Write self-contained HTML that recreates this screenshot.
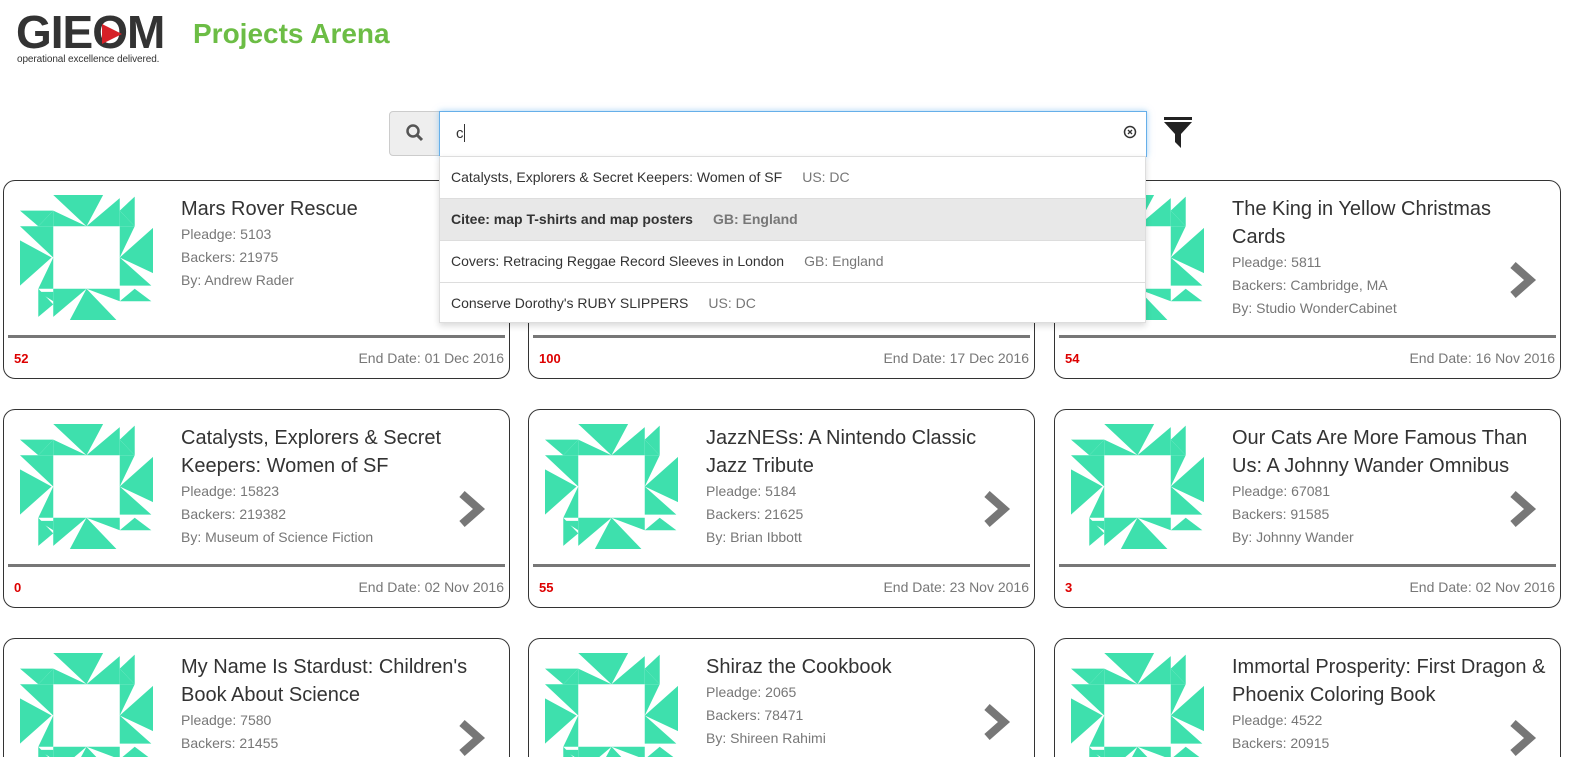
<!DOCTYPE html>
<html style="width:1574px;height:757px;overflow:hidden"><head><meta charset="utf-8"><style>
*{box-sizing:border-box;margin:0;padding:0}
body{width:1574px;height:757px;overflow:hidden;background:#fff;font-family:"Liberation Sans",Arial,sans-serif;position:relative}
.abs{position:absolute}
.card{position:absolute;width:507px;height:199px;border:1px solid #333;border-radius:12px;background:#fff;overflow:hidden}
.card svg.ic{position:absolute;left:16px;top:14px}
.card .t{position:absolute;left:177px;top:14px;font-size:20px;line-height:28px;color:#333;white-space:nowrap}
.card .d{font-size:14px;color:#777;line-height:23px}
.card .sep{position:absolute;left:4px;right:4px;top:154px;height:3px;background:#777}
.card .n{position:absolute;left:10px;top:170px;font-size:13px;font-weight:bold;color:#d00}
.card .e{position:absolute;right:5px;top:169px;font-size:14px;color:#777}
.card .ch{position:absolute;left:452px;top:79px}
.dd{position:absolute;left:439px;top:156px;width:707px;height:167px;background:#fff;border:1px solid #ddd;box-shadow:0 3px 6px rgba(0,0,0,.15)}
.dd div{height:42px;line-height:40px;padding-left:11px;font-size:14px;color:#333;border-bottom:1px solid #ddd}
.dd span{color:#777;margin-left:20px}
</style></head><body>
<svg width="0" height="0" style="position:absolute"><defs>
<g id="idn" fill="#3ee0ad">
<polygon points="1,0 2.5,0 2,1"/><polygon points="1,0.5 1,1 2,1"/><polygon points="2,1 3,0.1 3,1"/>
<polygon points="3,0.5 3.45,0.05 3.45,1"/><polygon points="3,0.5 3.45,1 3,1"/>
<polygon points="0,0.5 1,0.5 0.55,1"/><polygon points="0.55,1 1,0.5 1,1"/>
<polygon points="0,1 1,1 1,2"/><polygon points="0,1.45 0.95,2 0,2.9"/><polygon points="1,2 1,3 0.55,3"/>
<polygon points="3,1 3.45,1 3,2"/><polygon points="3,2 4,1.05 4,2.5"/><polygon points="3,2 3.95,2.9 3,2.9"/>
<polygon points="1,3 2,3 1,3.9"/><polygon points="1.5,4 2,3 2.9,4"/><polygon points="2,3 3,3 3,3.4"/>
<polygon points="3,3.4 3.45,3 3.95,3.4"/><polygon points="0.55,3 1,3.5 0.55,3.9"/><polygon points="0.55,3.1 1,3.1 1,3.4"/>
</g></defs></svg>

<div class="abs" style="left:16px;top:8px;font-size:46px;font-weight:bold;color:#333;letter-spacing:-1px;line-height:48px">GIE<span style="display:inline-block;position:relative">O<svg class="abs" style="left:10px;top:16px" width="20" height="20"><polygon points="0,0 20,10 0,20" fill="#d62027"/></svg></span>M</div>
<div class="abs" style="left:17px;top:54px;font-size:10px;color:#333;letter-spacing:-0.1px">operational excellence delivered.</div>
<div class="abs" style="left:193px;top:18px;font-size:28px;font-weight:bold;color:#6cbd45">Projects Arena</div>

<div class="abs" style="left:389px;top:111px;width:51px;height:45px;background:#eee;border:1px solid #ccc;border-radius:4px 0 0 4px"></div>
<svg class="abs" style="left:405px;top:123px" width="20" height="20"><circle cx="8" cy="8" r="5.5" fill="none" stroke="#555" stroke-width="2.5"/><line x1="12" y1="12" x2="17" y2="17" stroke="#555" stroke-width="3"/></svg>
<div class="abs" style="left:439px;top:111px;width:708px;height:46px;border:1px solid #66afe9;box-shadow:0 0 6px rgba(102,175,233,.6);background:#fff"></div>
<div class="abs" style="left:456px;top:124px;font-size:15px;color:#333">c<span style="display:inline-block;width:1px;height:18px;background:#333;vertical-align:-4px"></span></div>
<svg class="abs" style="left:1123px;top:125px" width="14" height="14"><circle cx="7" cy="7" r="5.5" fill="none" stroke="#333" stroke-width="1.5"/><path d="M5 5L9 9M9 5L5 9" stroke="#333" stroke-width="1.3"/></svg>
<svg class="abs" style="left:1163px;top:116px" width="30" height="33"><rect x="1" y="1" width="28" height="3" fill="#222"/><polygon points="1,6 29,6 18,18 18,32 12,26 12,18" fill="#222"/></svg>

<div class="card" style="left:3px;top:180px"><svg class="ic" width="133" height="125" viewBox="0 0 4 4" preserveAspectRatio="none"><use href="#idn"/></svg><div class="t">Mars Rover Rescue<div class="d">Pleadge: 5103<br>Backers: 21975<br>By: Andrew Rader</div></div><div class="sep"></div><div class="n">52</div><div class="e">End Date: 01 Dec 2016</div></div>
<div class="card" style="left:528px;top:180px"><svg class="ic" width="133" height="125" viewBox="0 0 4 4" preserveAspectRatio="none"><use href="#idn"/></svg><div class="sep"></div><div class="n">100</div><div class="e">End Date: 17 Dec 2016</div></div>
<div class="card" style="left:1054px;top:180px"><svg class="ic" width="133" height="125" viewBox="0 0 4 4" preserveAspectRatio="none"><use href="#idn"/></svg><div class="t">The King in Yellow Christmas<br>Cards<div class="d">Pleadge: 5811<br>Backers: Cambridge, MA<br>By: Studio WonderCabinet</div></div><svg class="ch" width="32" height="40"><polyline points="6,5 23,20 6,35" fill="none" stroke="#777" stroke-width="8"/></svg><div class="sep"></div><div class="n">54</div><div class="e">End Date: 16 Nov 2016</div></div>

<div class="card" style="left:3px;top:409px"><svg class="ic" width="133" height="125" viewBox="0 0 4 4" preserveAspectRatio="none"><use href="#idn"/></svg><div class="t">Catalysts, Explorers &amp; Secret<br>Keepers: Women of SF<div class="d">Pleadge: 15823<br>Backers: 219382<br>By: Museum of Science Fiction</div></div><svg class="ch" width="32" height="40"><polyline points="6,5 23,20 6,35" fill="none" stroke="#777" stroke-width="8"/></svg><div class="sep"></div><div class="n">0</div><div class="e">End Date: 02 Nov 2016</div></div>
<div class="card" style="left:528px;top:409px"><svg class="ic" width="133" height="125" viewBox="0 0 4 4" preserveAspectRatio="none"><use href="#idn"/></svg><div class="t">JazzNESs: A Nintendo Classic<br>Jazz Tribute<div class="d">Pleadge: 5184<br>Backers: 21625<br>By: Brian Ibbott</div></div><svg class="ch" width="32" height="40"><polyline points="6,5 23,20 6,35" fill="none" stroke="#777" stroke-width="8"/></svg><div class="sep"></div><div class="n">55</div><div class="e">End Date: 23 Nov 2016</div></div>
<div class="card" style="left:1054px;top:409px"><svg class="ic" width="133" height="125" viewBox="0 0 4 4" preserveAspectRatio="none"><use href="#idn"/></svg><div class="t">Our Cats Are More Famous Than<br>Us: A Johnny Wander Omnibus<div class="d">Pleadge: 67081<br>Backers: 91585<br>By: Johnny Wander</div></div><svg class="ch" width="32" height="40"><polyline points="6,5 23,20 6,35" fill="none" stroke="#777" stroke-width="8"/></svg><div class="sep"></div><div class="n">3</div><div class="e">End Date: 02 Nov 2016</div></div>

<div class="card" style="left:3px;top:638px"><svg class="ic" width="133" height="125" viewBox="0 0 4 4" preserveAspectRatio="none"><use href="#idn"/></svg><div class="t">My Name Is Stardust: Children's<br>Book About Science<div class="d">Pleadge: 7580<br>Backers: 21455<br>By: </div></div><svg class="ch" width="32" height="40"><polyline points="6,5 23,20 6,35" fill="none" stroke="#777" stroke-width="8"/></svg></div>
<div class="card" style="left:528px;top:638px"><svg class="ic" width="133" height="125" viewBox="0 0 4 4" preserveAspectRatio="none"><use href="#idn"/></svg><div class="t">Shiraz the Cookbook<div class="d">Pleadge: 2065<br>Backers: 78471<br>By: Shireen Rahimi</div></div><svg class="ch" width="32" height="40" style="top:63px"><polyline points="6,5 23,20 6,35" fill="none" stroke="#777" stroke-width="8"/></svg></div>
<div class="card" style="left:1054px;top:638px"><svg class="ic" width="133" height="125" viewBox="0 0 4 4" preserveAspectRatio="none"><use href="#idn"/></svg><div class="t">Immortal Prosperity: First Dragon &amp;<br>Phoenix Coloring Book<div class="d">Pleadge: 4522<br>Backers: 20915<br>By: </div></div><svg class="ch" width="32" height="40"><polyline points="6,5 23,20 6,35" fill="none" stroke="#777" stroke-width="8"/></svg></div>

<div class="dd">
<div>Catalysts, Explorers &amp; Secret Keepers: Women of SF<span>US: DC</span></div>
<div style="background:#e8e8e8;font-weight:bold">Citee: map T-shirts and map posters<span>GB: England</span></div>
<div>Covers: Retracing Reggae Record Sleeves in London<span>GB: England</span></div>
<div style="border-bottom:none">Conserve Dorothy's RUBY SLIPPERS<span>US: DC</span></div>
</div>
</body></html>
